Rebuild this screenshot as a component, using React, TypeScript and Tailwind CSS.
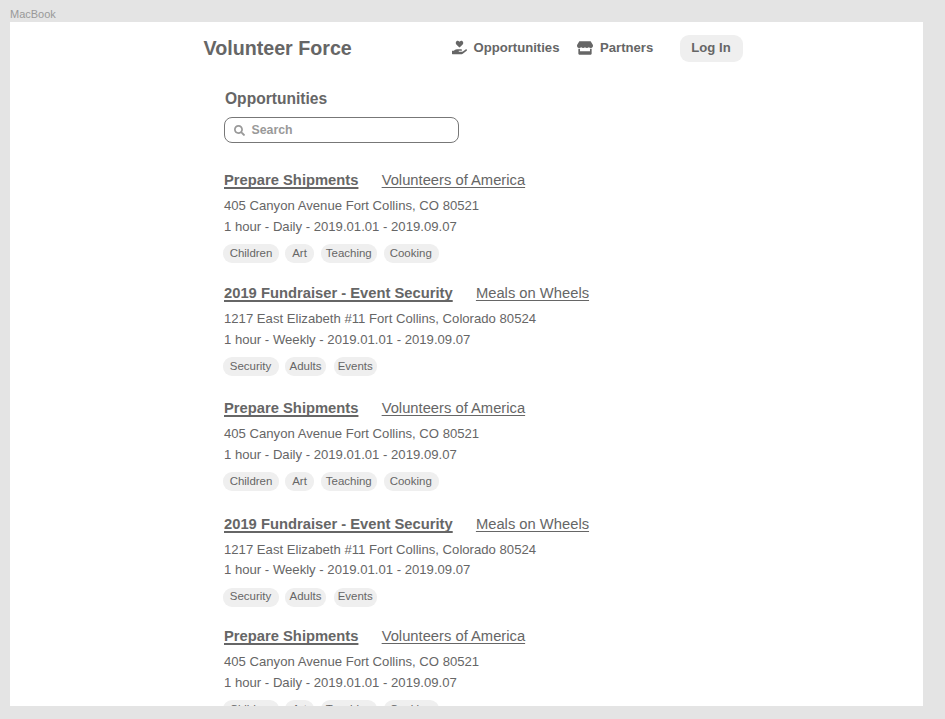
import React from "react";
import { FaHandHoldingHeart, FaSearch, FaStore } from "react-icons/fa";

type Tag = { label: string; className: string };
type Opportunity = {
  title: string;
  partner: string;
  address: string;
  schedule: string;
  tags: Tag[];
};

const shipments: Opportunity = {
  title: "Prepare Shipments",
  partner: "Volunteers of America",
  address: "405 Canyon Avenue Fort Collins, CO 80521",
  schedule: "1 hour - Daily - 2019.01.01 - 2019.09.07",
  tags: [
    { label: "Children", className: "w-[56px] mr-[6px]" },
    { label: "Art", className: "w-[29px] mr-[6.5px]" },
    { label: "Teaching", className: "w-[56.5px] mr-[7px]" },
    { label: "Cooking", className: "w-[54.5px] pr-[1px]" },
  ],
};

const fundraiser: Opportunity = {
  title: "2019 Fundraiser - Event Security",
  partner: "Meals on Wheels",
  address: "1217 East Elizabeth #11 Fort Collins, Colorado 80524",
  schedule: "1 hour - Weekly - 2019.01.01 - 2019.09.07",
  tags: [
    { label: "Security", className: "w-[56px] pr-[1px] mr-[6px]" },
    { label: "Adults", className: "w-[41px] mr-[7.5px]" },
    { label: "Events", className: "w-[43.5px]" },
  ],
};

const listings = [
  { item: shipments, className: "h-[113px]" },
  { item: fundraiser, className: "h-[115px]" },
  { item: shipments, className: "h-[115.5px]" },
  { item: fundraiser, className: "h-[112.5px]" },
  { item: shipments, className: "h-[113px]" },
];

function Listing({ item, className }: { item: Opportunity; className: string }) {
  return (
    <article className={`shrink-0 ${className}`}>
      <div className="flex h-[26px] items-start text-[14.76px] leading-[22px]">
        <a className="mr-[23.2px] font-bold underline decoration-[1.5px] underline-offset-[2px] [text-decoration-skip-ink:none]">
          {item.title}
        </a>
        <a className="underline decoration-1 underline-offset-[2px] [text-decoration-skip-ink:none]">
          {item.partner}
        </a>
      </div>
      <p className="text-[13.14px] leading-[21.5px]">{item.address}</p>
      <p className="text-[13.14px] leading-[20.5px]">{item.schedule}</p>
      <ul className="-ml-[1px] mt-[7px] flex">
        {item.tags.map((tag) => (
          <li
            key={tag.label}
            className={`flex h-[19px] items-center justify-center rounded-[9px] bg-[#efefef] text-[11.48px] ${tag.className}`}
          >
            {tag.label}
          </li>
        ))}
      </ul>
    </article>
  );
}

export default function App() {
  return (
    <div className="flex h-[719px] w-[945px] flex-col overflow-hidden bg-[#e4e4e4] pl-[10px] font-['Liberation_Sans',Arial,sans-serif] text-[#666]">
      <div className="h-[22px] shrink-0 pt-[6px] text-[11px] leading-4 text-[#999]">MacBook</div>
      <div className="flex h-[684px] w-[912.5px] shrink-0 flex-col overflow-hidden bg-white">
        <header className="flex h-[52px] shrink-0 items-center pl-[193.5px]">
          <h1 className="w-[248.5px] text-[19.68px] font-bold leading-[24px]">Volunteer Force</h1>
          <nav className="flex items-center text-[13.12px] font-bold">
            <a className="flex w-[125px] items-center whitespace-nowrap">
              <FaHandHoldingHeart className="mb-px mr-[6.5px] size-[15px]" />
              Opportunities
            </a>
            <a className="flex w-[103px] items-center whitespace-nowrap">
              <FaStore className="mb-px mr-[7px] size-[16px]" />
              Partners
            </a>
            <button className="flex h-[27px] w-[63px] items-center justify-center rounded-[9px] bg-[#efefef] pr-[1px]">
              Log In
            </button>
          </nav>
        </header>
        <main className="flex flex-col pl-[214px]">
          <h2 className="mt-[15px] pl-[1px] text-[15.58px] font-bold leading-5">Opportunities</h2>
          <div className="mt-[8px] flex h-[26px] w-[235px] items-center rounded-[8px] border border-[#777] pl-[9px] text-[12.3px] font-bold text-[#999]">
            <FaSearch className="mr-[6.5px] size-[11px]" />
            Search
          </div>
          <section className="mt-[26px] flex flex-col">
            {listings.map((listing, index) => (
              <Listing key={index} item={listing.item} className={listing.className} />
            ))}
          </section>
        </main>
      </div>
    </div>
  );
}
